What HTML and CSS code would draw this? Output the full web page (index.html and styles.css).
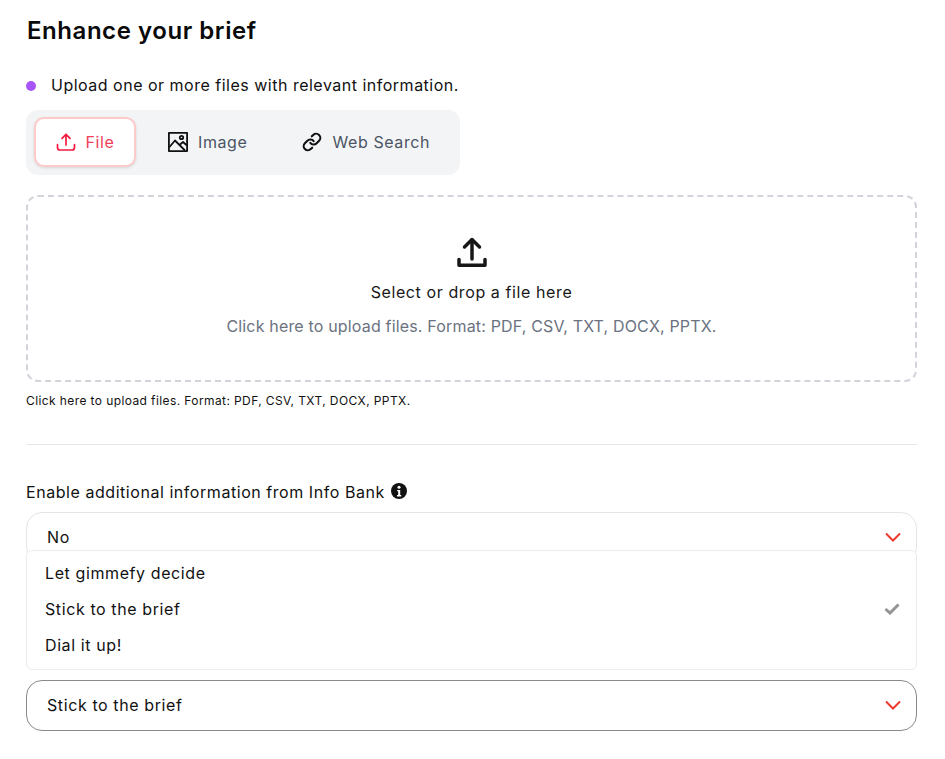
FILE: index.html
```html
<!DOCTYPE html>
<html lang="en">
<head>
<meta charset="utf-8">
<title>Enhance your brief</title>
<link rel="stylesheet" href="styles.css">
</head>
<body>
<main class="page">
  <h1 class="title">Enhance your brief</h1>
  <div class="bullet-row"><span class="dot"></span><span>Upload one or more files with relevant information.</span></div>
  <div class="tabs">
    <button class="tab tab-active">
      <svg class="tab-icon" viewBox="0 0 20 20" fill="none" stroke="#f5193f" stroke-width="1.7" stroke-linecap="round" stroke-linejoin="round"><path d="M1.500 12.500v3a2.500 2.500 0 0 0 2.500 2.500h12a2.500 2.500 0 0 0 2.500-2.500v-3"/><path d="M10 13V2.500"/><path d="M6 6.300 10 2.300l4 4"/></svg>
      <span>File</span>
    </button>
    <button class="tab tab-image">
      <svg class="tab-icon" viewBox="0 0 20 20" fill="none" stroke="#111" stroke-width="1.800" stroke-linejoin="round"><rect x="0.900" y="0.900" width="18.200" height="18.200"/><path d="M1 15.500 7 8.500l10 10"/><path d="M11.500 13 15 10l4 3.500"/><circle cx="13.500" cy="5.500" r="1.700"/></svg>
      <span>Image</span>
    </button>
    <button class="tab tab-web">
      <svg class="tab-icon" viewBox="0 0 24 24" fill="none" stroke="#111" stroke-width="2.500" stroke-linecap="round" stroke-linejoin="round"><path d="M10 13a5 5 0 0 0 7.540.54l3-3a5 5 0 0 0-7.070-7.070l-1.720 1.710"/><path d="M14 11a5 5 0 0 0-7.540-.54l-3 3a5 5 0 0 0 7.070 7.070l1.710-1.710"/></svg>
      <span>Web Search</span>
    </button>
  </div>
  <div class="drop">
    <svg class="drop-icon" viewBox="0 0 30 30" fill="none" stroke="#171717" stroke-width="3.500" stroke-linecap="round" stroke-linejoin="round"><path d="M2 22.500v5.700h26v-5.700"/><path d="M15 22V3"/><path d="M7.500 10 15 2.500 22.500 10"/></svg>
    <div class="drop-title">Select or drop a file here</div>
    <div class="drop-sub">Click here to upload files. Format: PDF, CSV, TXT, DOCX, PPTX.</div>
  </div>
  <p class="hint">Click here to upload files. Format: PDF, CSV, TXT, DOCX, PPTX.</p>
  <hr class="rule">
  <div class="label-row">
    <span>Enable additional information from Info Bank</span>
    <svg class="info" viewBox="0 0 16 16"><circle cx="8" cy="8" r="8" fill="#111"/><circle cx="8" cy="4.300" r="1.500" fill="#fff"/><path d="M6.200 7h3v5h1v1.400H6v-1.400h1.200V8.300h-1z" fill="#fff"/></svg>
  </div>
  <div class="select select-open">
    <span>No</span>
    <svg class="chev" viewBox="0 0 16 10" fill="none" stroke="#ef3b2d" stroke-width="2"><path d="M1 1.500 8 8.500l7-7"/></svg>
  </div>
  <ul class="menu">
    <li class="option">Let gimmefy decide</li>
    <li class="option"><span>Stick to the brief</span>
      <svg class="check" viewBox="0 0 16 12" fill="none" stroke="#949494" stroke-width="3"><path d="M1.500 6 6 10 14.500 1.500"/></svg></li>
    <li class="option">Dial it up!</li>
  </ul>
  <div class="select select-closed">
    <span>Stick to the brief</span>
    <svg class="chev" viewBox="0 0 16 10" fill="none" stroke="#ef3b2d" stroke-width="2"><path d="M1 1.500 8 8.500l7-7"/></svg>
  </div>
</main>
</body>
</html>
```
FILE: styles.css
```css
* { box-sizing: border-box; }
html, body { margin: 0; padding: 0; background: #fff; }
body { font-family: Inter, "Noto Sans", "Liberation Sans", sans-serif; color: #111; height: 759px; overflow: hidden; }
.page { padding: 0 28px 0 26px; }
.title { margin: 0; padding: 15px 0 0 1px; font-size: 24px; line-height: 32px; font-weight: 600; letter-spacing: 0.55px; color: #0a0a0a; }
.bullet-row { display: flex; align-items: center; gap: 15px; margin-top: 26px; height: 24px; font-size: 16px; letter-spacing: 0.5px; color: #111; }
.dot { width: 10px; height: 10px; margin-top: 2px; border-radius: 50%; background: #a855f7; flex: none; }
.tabs { display: flex; align-items: center; width: 434px; height: 65px; margin-top: 13px; padding: 0 8px; background: #f3f4f6; border-radius: 12px; }
.tab { display: flex; align-items: center; height: 50px; margin-bottom: 1px; border: 2px solid transparent; background: none; border-radius: 10px; font: inherit; font-size: 16px; letter-spacing: 0.6px; color: #4b5563; padding: 0; }
.tab-icon { width: 20px; height: 20px; flex: none; }
.tab-active { width: 102px; justify-content: center; gap: 10px; background: #fff; border-color: #fecaca; color: #ef4058; box-shadow: 0 1px 3px rgba(0,0,0,.12); }
.tab-image { margin-left: 30px; gap: 10px; }
.tab-web { margin-left: 51px; gap: 10px; }
.drop { display: flex; flex-direction: column; align-items: center; height: 187px; margin-top: 20px; padding-top: 40px; border: 2px dashed #d1d5db; border-radius: 12px; }
.drop-icon { width: 30px; height: 30px; flex: none; }
.drop-title { margin-top: 13px; font-size: 16px; line-height: 24px; letter-spacing: 0.6px; font-weight: 400; color: #171717; }
.drop-sub { margin-top: 10px; font-size: 16px; line-height: 24px; letter-spacing: 0.17px; color: #6b7280; }
.hint { margin: 11px 0 0; font-size: 12px; line-height: 16px; letter-spacing: 0.4px; color: #111; }
.rule { margin: 35px 0 0; border: 0; border-top: 1px solid #e5e7eb; }
.label-row { display: flex; align-items: center; gap: 6px; height: 24px; margin-top: 35px; font-size: 16px; letter-spacing: 0.55px; color: #111; }
.info { width: 16px; height: 16px; margin-top: -3px; flex: none; }
.select { display: flex; align-items: center; justify-content: space-between; height: 51px; padding: 0 15px 2px 20px; font-size: 16px; letter-spacing: 0.6px; border-radius: 16px; background: #fff; color: #111; }
.select-open { border: 1px solid #e5e5e5; margin-top: 8px; }
.select-closed { border: 1px solid #8a8a8a; margin-top: 10px; }
.chev { width: 16px; height: 10px; flex: none; }
.menu { position: relative; list-style: none; margin: -13px 0 0; padding: 4px 0 6px; height: 120px; background: #fff; border: 1px solid #ececec; border-radius: 6px; font-size: 16px; letter-spacing: 0.6px; }
.option { display: flex; align-items: center; justify-content: space-between; height: 36px; padding: 0 16px 0 18px; color: #111; }
.check { width: 16px; height: 12px; flex: none; }
```
